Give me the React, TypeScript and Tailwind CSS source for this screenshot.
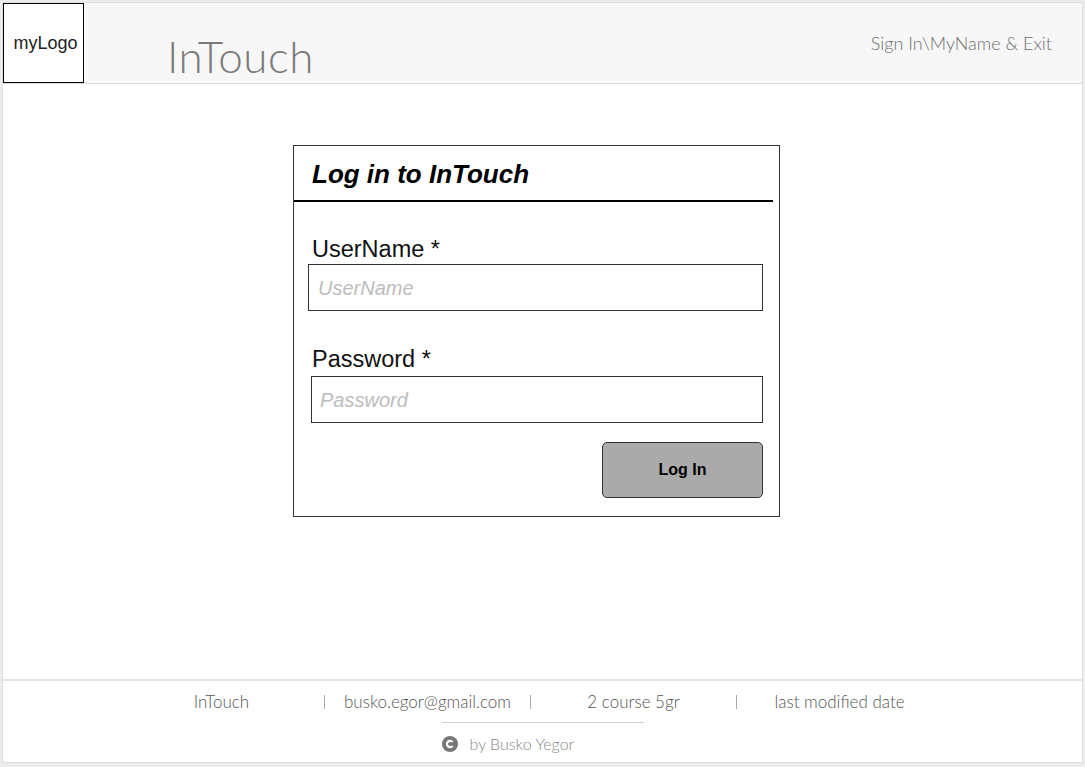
import React from "react";

export default function App() {
  return (
    <div className="w-[1085px] h-[767px] bg-[#ececec] pl-[2px] pt-[2px] pr-[2px] pb-[4px] overflow-hidden">
      <div className="w-full h-full bg-white border border-[#dedede] flex flex-col">
        {/* Header */}
        <div className="h-[81px] bg-[#f7f7f7] border-b border-[#dcdcdc] flex items-start relative shrink-0">
          <div className="w-[81px] h-[80px] border border-black bg-white flex items-center justify-center pl-[4px] shrink-0">
            <span className="text-[18px] text-[#222]" style={{ fontFamily: '"Liberation Sans", Arial, sans-serif' }}>
              myLogo
            </span>
          </div>
          <div
            className="ml-[83px] mt-[31px] text-[44px] leading-none font-light text-[#7a7a7a] tracking-[0.5px]"
            style={{ fontFamily: 'Lato, sans-serif' }}
          >
            InTouch
          </div>
          <div className="flex-1" />
          <div
            className="mt-[31px] mr-[30px] text-[18px] leading-none font-light text-[#6f6f6f]"
            style={{ fontFamily: 'Lato, sans-serif' }}
          >
            Sign In\MyName &amp; Exit
          </div>
        </div>

        {/* Main */}
        <div className="flex-1 relative">
          <div
            className="ml-[290px] mt-[61px] w-[487px] h-[372px] border border-[#333] flex flex-col"
            style={{ fontFamily: '"Liberation Sans", Arial, sans-serif' }}
          >
            <div className="h-[54px] flex items-center pl-[18px] pt-[2px]">
              <span className="text-[26px] font-bold italic text-black">Log in to InTouch</span>
            </div>
            <div className="h-[2px] w-[479px] bg-black" />
            <div className="pl-[18px] pt-[35px] text-[23.5px] leading-[24px] text-[#111]">UserName *</div>
            <div className="ml-[14px] mt-[3px] w-[455px] h-[47px] border border-[#333] flex items-center pl-[9px]">
              <span className="text-[20px] italic text-[#bdbdbd]">UserName</span>
            </div>
            <div className="pl-[18px] pt-[36px] text-[23.5px] leading-[24px] text-[#111]">Password *</div>
            <div className="ml-[17px] mt-[5px] w-[452px] h-[47px] border border-[#333] flex items-center pl-[8px]">
              <span className="text-[20px] italic text-[#bdbdbd]">Password</span>
            </div>
            <div className="ml-[308px] mt-[19px] w-[161px] h-[56px] bg-[#aaaaaa] border border-[#333] rounded-[5px] flex items-center justify-center">
              <span className="text-[16px] font-bold text-black">Log In</span>
            </div>
          </div>
        </div>

        {/* Footer */}
        <div
          className="h-[83px] border-t-2 border-[#e6e6e6] shrink-0 flex flex-col"
          style={{ fontFamily: 'Lato, sans-serif' }}
        >
          <div className="ml-[116px] mt-[11px] flex items-center h-[20px] text-[17px] font-light text-[#555]">
            <div className="w-[205px] text-center">InTouch</div>
            <div className="w-px h-[14px] bg-[#aaa]" />
            <div className="w-[205px] text-center">busko.egor@gmail.com</div>
            <div className="w-px h-[14px] bg-[#aaa]" />
            <div className="w-[205px] text-center">2 course 5gr</div>
            <div className="w-px h-[14px] bg-[#aaa]" />
            <div className="w-[205px] text-center">last modified date</div>
          </div>
          <div className="mx-auto mt-[10px] w-[202px] h-px bg-[#d0d0d0]" />
          <div className="mx-auto mt-[12px] w-[202px] flex items-center gap-[12px] text-[16px] leading-[18px] font-light text-[#888]">
            <svg width="16" height="16" viewBox="0 0 16 16">
              <circle cx="8" cy="8" r="8" fill="#777" />
              <path d="M10.6 6.2 A3.1 3.1 0 1 0 10.6 9.8" fill="none" stroke="#fff" strokeWidth="2.2" />
            </svg>
            <span>by Busko Yegor</span>
          </div>
        </div>
      </div>
    </div>
  );
}
